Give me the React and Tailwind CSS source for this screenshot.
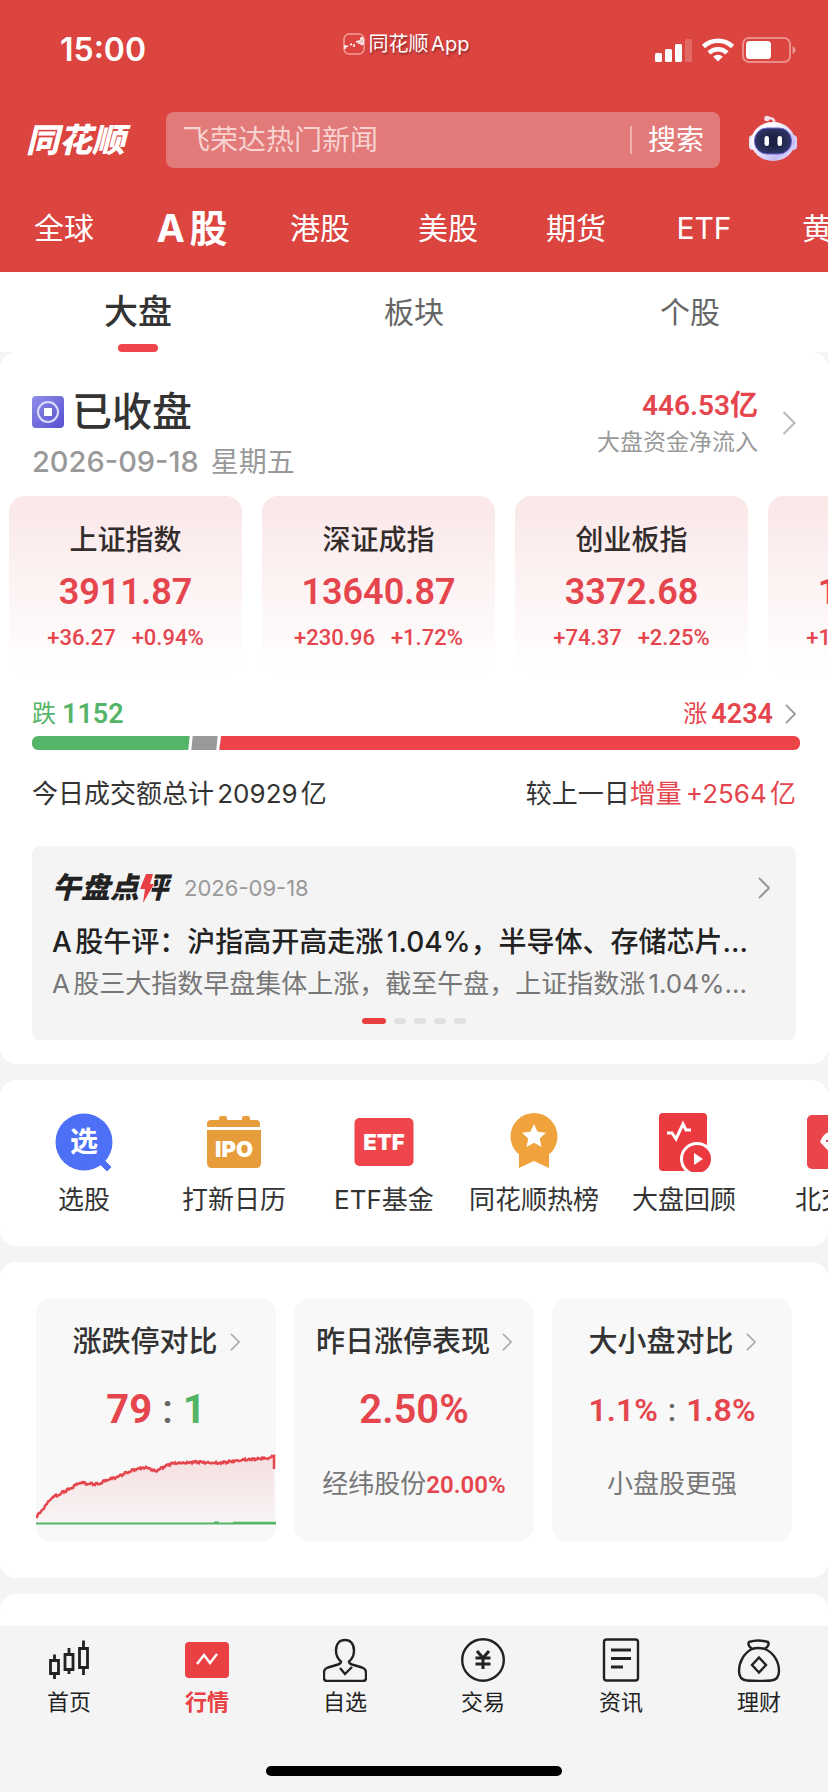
import { useState } from 'react';

const markets = ['全球', 'A股', '港股', '美股', '期货', 'ETF', '黄金'];
const sections = ['大盘', '板块', '个股'];

const indices = [
  { name: '上证指数', value: '3911.87', diff: '+36.27', pct: '+0.94%' },
  { name: '深证成指', value: '13640.87', diff: '+230.96', pct: '+1.72%' },
  { name: '创业板指', value: '3372.68', diff: '+74.37', pct: '+2.25%' },
  { name: '科创50', value: '1672.81', diff: '+18.65', pct: '+1.13%' },
];

const breadth = { down: 1152, flat: 184, up: 4234 };

// limit-up count over the day, in chart units
const limitUps = [
  [0, 67], [16, 48], [31, 40], [44, 33], [61, 34], [78, 28], [94, 21], [111, 17],
  [119, 21], [137, 13], [164, 12], [184, 13], [204, 10], [231, 8], [238, 6],
];

function buildLine(points) {
  const out = [];
  for (let i = 0; i < points.length - 1; i++) {
    const [x1, y1] = points[i];
    const [x2, y2] = points[i + 1];
    for (let x = x1; x < x2; x += 1) {
      const noise = Math.sin(x * x * 1.3) * 0.9 + Math.sin(x * 0.9) * 0.4;
      out.push(`${x} ${(y1 + ((y2 - y1) * (x - x1)) / (x2 - x1) + noise).toFixed(1)}`);
    }
  }
  return `M${out.join('L')}L238 6V19`;
}

function Chevron({ className }) {
  return (
    <svg viewBox="0 0 12 22" fill="none" stroke="currentColor" strokeWidth="2" className={className} aria-hidden="true">
      <path d="M1 1l10 10L1 21" />
    </svg>
  );
}

function StatusBar() {
  return (
    <div className="grid h-[100px] grid-cols-3 items-center">
      <div className="pl-[60px] text-[32px] leading-10 font-semibold">15:00</div>
      <div className="flex items-center justify-center gap-1 pr-4 pb-3 text-xl leading-7 [text-shadow:1px_2px_2px_rgb(0_0_0/0.35)]">
        <svg viewBox="0 0 22 22" className="size-[22px]" fill="none" stroke="#fff" aria-hidden="true">
          <rect x="1" y="1" width="20" height="20" rx="5" stroke="#f39c98" strokeWidth="1.5" />
          <path d="M2 12v4M2 14l3-1M7 12l2-1M11 11v3M13 9l3-1v3M18 5c3-2 3 9 0 6z" strokeWidth="1.5" />
        </svg>
        <span className="[text-autospace:normal]">同花顺App</span>
      </div>
      <div className="flex items-center justify-end gap-2 pr-8">
        <svg viewBox="0 0 40 24" className="h-6 w-10" fill="#fff" aria-hidden="true">
          <rect x="1" y="15" width="7" height="9" rx="1.5" />
          <rect x="11" y="11" width="7" height="13" rx="1.5" />
          <rect x="21" y="6" width="7" height="18" rx="1.5" />
          <rect x="31" y="1" width="7" height="23" rx="1.5" opacity="0.2" />
        </svg>
        <svg viewBox="0 0 32 24" className="h-6 w-8" fill="none" stroke="#fff" strokeWidth="4.500" aria-hidden="true">
          <path d="M1.500 8.500a21 21 0 0 1 29 0" />
          <path d="M7 14.800a13 13 0 0 1 18 0" />
          <path d="M16 23.500l-4.800-4.800a7 7 0 0 1 9.600 0z" fill="#fff" stroke="none" />
        </svg>
        <svg viewBox="0 0 54 26" className="h-[26px] w-[54px]" aria-hidden="true">
          <rect x="1" y="1" width="47" height="24" rx="6" fill="none" stroke="#fff" strokeOpacity="0.4" strokeWidth="2" />
          <rect x="4" y="4" width="25" height="18" rx="3.500" fill="#fff" />
          <path d="M50.500 9c4 1.500 4 6.500 0 8z" fill="#fff" opacity="0.45" />
        </svg>
      </div>
    </div>
  );
}

function Robot() {
  return (
    <svg viewBox="0 0 50 48" className="h-12 w-[50px]" aria-hidden="true">
      <defs>
        <linearGradient id="shell" x1="0" y1="0" x2="1" y2="1">
          <stop offset="0.3" stopColor="#fdfaff" />
          <stop offset="0.75" stopColor="#c4bcf3" />
          <stop offset="1" stopColor="#fff" />
        </linearGradient>
        <radialGradient id="visor">
          <stop offset="0.3" stopColor="#1c2143" />
          <stop offset="1" stopColor="#2d3463" />
        </radialGradient>
      </defs>
      <path d="M26 9c1-4-2-5-6-5" fill="none" stroke="#f3dcea" strokeWidth="2.500" />
      <circle cx="19" cy="4.500" r="2.800" fill="#f3dcea" />
      <rect x="1" y="21" width="8" height="15" rx="4" fill="#e9e2fb" />
      <rect x="41" y="21" width="8" height="15" rx="4" fill="#d5ccf7" />
      <ellipse cx="25" cy="27.500" rx="22" ry="19.500" fill="url(#shell)" />
      <rect x="6.500" y="14" width="37" height="26" rx="12.500" fill="url(#visor)" stroke="#7064d8" />
      <rect x="16.500" y="22" width="4.500" height="10" rx="2.200" fill="#fff" />
      <rect x="29.500" y="22" width="4.500" height="10" rx="2.200" fill="#fff" />
    </svg>
  );
}

const toolIcons = {
  pick: (
    <>
      <circle cx="30" cy="30" r="28.500" fill="#4d70f7" />
      <path d="M49 47l8 8-4 4-9-9z" fill="#4d70f7" stroke="#4d70f7" />
      <text x="30" y="40" textAnchor="middle" fontSize="28" fontWeight="700" fill="#fff">选</text>
    </>
  ),
  ipo: (
    <>
      <path d="M3 15V12q0-4 4-4h8V6q0-2 2-2h4q2 0 2 2v2h15V6q0-2 2-2h4q2 0 2 2v2h6q4 0 4 4v3z" fill="#e79d3b" />
      <path d="M3 18h54v33q0 5-5 5H8q-5 0-5-5z" fill="#e79d3b" />
      <text x="30" y="45" textAnchor="middle" fontSize="22" fontWeight="900" fill="#fff">IPO</text>
    </>
  ),
  etf: (
    <>
      <rect x="0.500" y="6" width="59" height="48" rx="5" fill="#ee464b" />
      <text x="30" y="38" textAnchor="middle" fontSize="22" fontWeight="900" fill="#fff">ETF</text>
    </>
  ),
  medal: (
    <>
      <path d="M15 38h30v18l-15-7-15 7z" fill="#f0a33d" />
      <circle cx="30" cy="24.500" r="23.500" fill="#f0a33d" />
      <path d="M30 12l3.600 7.800 8.400 1-6.200 5.800 1.700 8.400-7.500-4.200-7.500 4.200 1.700-8.400-6.200-5.800 8.400-1z" fill="#fff" />
    </>
  ),
  review: (
    <>
      <rect x="5" y="1" width="48" height="58" rx="4" fill="#ea3a40" />
      <path d="M13 21h5l4 6 7-15 3 6h5" fill="none" stroke="#fff" strokeWidth="3" />
      <circle cx="43" cy="47" r="15.500" fill="#ea3a40" stroke="#fff" strokeWidth="3" />
      <path d="M40 41l9 6-9 6z" fill="#fff" />
    </>
  ),
  north: (
    <>
      <rect x="3" y="3" width="54" height="54" rx="5" fill="#ea454a" />
      <path d="M16 30q4-11 14-11t14 11L30 45z" fill="#fff" />
      <path d="M22 29h16M26 23l4 6 4-6" fill="none" stroke="#ea454a" strokeWidth="2" />
    </>
  ),
};

const tools = [
  { label: '选股', icon: 'pick' },
  { label: '打新日历', icon: 'ipo' },
  { label: 'ETF基金', icon: 'etf' },
  { label: '同花顺热榜', icon: 'medal' },
  { label: '大盘回顾', icon: 'review' },
  { label: '北交所', icon: 'north' },
];

const navIcons = {
  home: <path strokeWidth="2.800" d="M5.500 15.500V21M1.500 21.500h8v13h-8zM5.500 34.500V40M20 9v6M16 15.500h8v15h-8zM20 30.500V35M34.500 1.500V9M30.500 9.500h8v19h-8zM34.500 28.500V36" />,
  market: (
    <>
      <rect x="0" y="4" width="44" height="36" rx="4" fill="#e94043" stroke="none" />
      <path d="M12 26l7-9 6 8 7-9" stroke="#fff" />
    </>
  ),
  self: (
    <>
      <path d="M18 23.500c0 2-1.500 2.500-3 3L5 29.500q-4 1.500-4 5V40q0 3 3 3h36q3 0 3-3v-5.500q0-3.500-4-5l-10-3c-1.500-.5-3-1-3-3 2.500-2 5-5.500 5-11C31 6 27.500 2 22 2s-9 4-9 10.500c0 5.500 2.500 9 5 11z" />
      <path d="M17 30l5 6 7-7" />
    </>
  ),
  trade: (
    <>
      <circle cx="22" cy="22" r="20.800" />
      <path d="M16 13l6 7 6-7M14.500 20h15M14.500 26h15M22 20v11" strokeWidth="3" />
    </>
  ),
  news: (
    <>
      <rect x="5" y="1.500" width="34" height="41" rx="2.500" />
      <path d="M12 12h20M12 20.500h20M12 29h12" strokeWidth="2.800" />
    </>
  ),
  wealth: (
    <>
      <path d="M15 11q-5-4-3-7 9-3 19 0 2 3-3 7-7-2-13 0zM15 11C7 15 2 24 2 33q0 9 8 9.500 12 1 24 0 8-.5 8-9.500c0-9-5-18-14-22" />
      <path d="M22 19.500l7 7.500-7 7.500-7-7.500z" />
    </>
  ),
};

const navItems = [
  { label: '首页', icon: 'home' },
  { label: '行情', icon: 'market' },
  { label: '自选', icon: 'self' },
  { label: '交易', icon: 'trade' },
  { label: '资讯', icon: 'news' },
  { label: '理财', icon: 'wealth' },
];

function StatCard({ title, children }) {
  return (
    <a href="#" className="flex flex-col overflow-hidden rounded-2xl bg-[#f8f8f8] pt-6 text-center">
      <h3 className="flex items-center justify-center gap-3 text-[29px] leading-10 font-medium whitespace-nowrap text-[#333]">
        {title}
        <Chevron className="h-[18px] w-[10px] text-[#aaa]" />
      </h3>
      {children}
    </a>
  );
}

export default function App() {
  const [market, setMarket] = useState('A股');
  const [section, setSection] = useState('大盘');
  const line = buildLine(limitUps);

  return (
    <div className="flex min-h-screen flex-col overflow-x-hidden bg-[#f4f4f4] font-['Inter','Noto_Sans_CJK_SC',sans-serif] text-[#333]">
      {/* Header */}
      <header className="bg-[#dc4440] text-white">
        <StatusBar />
        <div className="flex h-20 items-center gap-7 pr-[30px] pl-[26px]">
          <h1 className="w-28 text-[33px] leading-10 font-black whitespace-nowrap italic">同花顺</h1>
          <form className="flex h-14 min-w-0 flex-1 items-center rounded-lg bg-[#e27a79] px-4" onSubmit={e => e.preventDefault()}>
            <input
              type="search"
              aria-label="搜索"
              placeholder="飞荣达热门新闻"
              className="min-w-0 flex-1 bg-transparent text-[28px] leading-9 outline-none placeholder:text-[#f8d2d0]"
            />
            <span className="h-7 w-0.5 bg-[#efb0ae]" />
            <button type="submit" className="pl-4 text-[28px] leading-9">搜索</button>
          </form>
          <button type="button" aria-label="智能助手" className="pb-1">
            <Robot />
          </button>
        </div>
        <nav className="flex h-[92px] items-center overflow-hidden pt-1">
          {markets.map(m => (
            <button
              key={m}
              type="button"
              onClick={() => setMarket(m)}
              className={`w-32 shrink-0 leading-[52px] whitespace-nowrap [text-autospace:normal] ${m === market ? 'text-[38px] font-bold' : 'text-[30px]'}`}
            >
              {m}
            </button>
          ))}
        </nav>
      </header>

      {/* Section tabs */}
      <div className="grid h-20 grid-cols-3 bg-white">
        {sections.map(s => (
          <button
            key={s}
            type="button"
            onClick={() => setSection(s)}
            className={`flex flex-col items-center justify-between pt-4 leading-[48px] ${s === section ? 'text-[34px] font-medium text-[#333]' : 'text-[30px] text-[#666]'}`}
          >
            {s}
            {s === section && <span className="h-2 w-10 rounded-full bg-[#ef454a]" />}
          </button>
        ))}
      </div>

      <main className="flex flex-1 flex-col gap-4">
        {/* Market overview */}
        <section className="rounded-2xl bg-white pt-9 pb-6">
          <div className="flex justify-between px-8">
            <div>
              <h2 className="flex items-center gap-2 text-[40px] leading-[48px] font-medium">
                <svg viewBox="0 0 32 32" className="size-8" aria-hidden="true">
                  <defs>
                    <linearGradient id="coin" x1="0" y1="0" x2="1" y2="1">
                      <stop stopColor="#8d8de8" />
                      <stop offset="1" stopColor="#5650cf" />
                    </linearGradient>
                  </defs>
                  <rect width="32" height="32" rx="4" fill="url(#coin)" />
                  <circle cx="16" cy="16" r="10" fill="none" stroke="#dcdcfa" strokeWidth="2" />
                  <rect x="12" y="12" width="8" height="8" fill="#fff" />
                </svg>
                已收盘
              </h2>
              <p className="mt-2 flex gap-3 text-[28px] leading-9 text-[#999]">
                <span className="text-[29px] font-medium">2026-09-18</span> 星期五
              </p>
            </div>
            <a href="#" className="flex items-center gap-6 self-start text-right">
              <span>
                <strong className="block font-['Roboto','Noto_Sans_CJK_SC',sans-serif] text-[28px] leading-9 font-semibold text-[#e5454d]">446.53亿</strong>
                <span className="mt-0.5 block text-[23px] leading-8 text-[#999]">大盘资金净流入</span>
              </span>
              <Chevron className="h-6 w-[14px] text-[#bbb]" />
            </a>
          </div>

          <div className="mt-4 flex gap-5 overflow-hidden pl-[9px]">
            {indices.map(i => (
              <a
                key={i.name}
                href="#"
                className="w-[233px] shrink-0 rounded-2xl bg-linear-to-b from-[#fae7e8] to-white pt-6.5 pb-5.5 text-center whitespace-nowrap text-[#e5454d]"
              >
                <h3 className="text-[28px] leading-9 font-medium text-[#332c2d]">{i.name}</h3>
                <p className="mt-3 font-['Roboto'] text-4xl leading-[44px] font-semibold">{i.value}</p>
                <p className="mt-2.5 flex justify-center gap-4 font-['Roboto'] text-[22px] leading-7 font-medium">
                  <span>{i.diff}</span>
                  <span>{i.pct}</span>
                </p>
              </a>
            ))}
          </div>

          <div className="px-8">
            <div className="mt-6 flex justify-between">
              <p className="flex items-center gap-1.5 text-[24px] leading-8 text-[#54b467]">
                跌
                <span className="font-['Roboto'] text-[27px] font-semibold">{breadth.down}</span>
              </p>
              <a href="#" className="flex items-center gap-1 text-[24px] leading-8 text-[#e5454d]">
                涨
                <span className="font-['Roboto'] text-[27px] font-semibold">{breadth.up}</span>
                <Chevron className="ml-2 h-5 w-[11px] text-[#999]" />
              </a>
            </div>
            <div className="-mr-1 mt-1.5 flex h-3.5 overflow-hidden rounded-md">
              <div className="bg-[#54b467]" style={{ flexGrow: breadth.down }} />
              <div className="-ml-0.5 -skew-x-6 border-x-3 border-white bg-[#999]" style={{ flexGrow: breadth.flat }} />
              <div className="-ml-1 bg-[#ec4448] [clip-path:polygon(5px_0,100%_0,100%_100%,3px_100%)]" style={{ flexGrow: breadth.up }} />
            </div>
            <div className="mt-6.5 flex justify-between text-[26px] leading-9 [text-autospace:normal]">
              <p>今日成交额总计20929亿</p>
              <p>
                较上一日<span className="text-[#e5454d]">增量</span>
                <span className="ml-1 text-[#e5454d]">+2564亿</span>
              </p>
            </div>

            {/* Midday comment */}
            <a href="#" className="mt-8.5 block rounded-lg bg-[#f4f4f4] px-5 pt-6 pb-4">
              <div className="flex items-center gap-4">
                <h3 className="text-[29px] leading-9 font-black whitespace-nowrap text-[#222] italic">
                  午盘点
                  <span className="relative">
                    评
                    <svg viewBox="0 0 16 36" className="absolute top-0 left-0 h-9 w-4" aria-hidden="true">
                      <path d="M2 0h14l-6 36H-4z" fill="#f4f4f4" />
                      <path d="M7 4h7l-3 10h4L4 33l2-14H1z" fill="#ea3f45" />
                    </svg>
                  </span>
                </h3>
                <time className="text-[22px] leading-9 text-[#999]">2026-09-18</time>
                <Chevron className="mr-1.5 ml-auto h-[22px] w-3 text-[#999]" />
              </div>
              <p className="mt-4 overflow-hidden text-[28px] leading-10 font-medium whitespace-nowrap text-[#222] [text-autospace:normal]">
                A股午评：沪指高开高走涨1.04%，半导体、存储芯片...
              </p>
              <p className="mt-1 overflow-hidden text-[26px] leading-9 whitespace-nowrap text-[#777] [text-autospace:normal]">
                A股三大指数早盘集体上涨，截至午盘，上证指数涨1.04%...
              </p>
              <div className="mt-4 flex justify-center gap-2">
                <span className="h-1.5 w-6 rounded-full bg-[#ea3f40]" />
                {[1, 2, 3, 4].map(n => (
                  <span key={n} className="h-1.5 w-3 rounded-full bg-[#e0e0e0]" />
                ))}
              </div>
            </a>
          </div>
        </section>

        {/* Tools */}
        <section className="flex overflow-hidden rounded-2xl bg-white pt-8 pb-7.5 pl-[9px]">
          {tools.map(t => (
            <a key={t.label} href="#" className="flex w-[150px] shrink-0 flex-col items-center">
              <svg viewBox="0 0 60 60" className="size-[60px]" aria-hidden="true">{toolIcons[t.icon]}</svg>
              <span className="mt-3 text-[26px] leading-8 whitespace-nowrap">{t.label}</span>
            </a>
          ))}
        </section>

        {/* Statistics */}
        <section className="grid grid-cols-3 gap-[18px] rounded-2xl bg-white p-9">
          <StatCard title="涨跌停对比">
            <p className="mt-6 flex justify-center gap-2.5 font-['Roboto'] text-[40px] leading-[48px] font-bold text-[#e5454d]">
              79
              <span className="font-medium text-[#666]">:</span>
              <span className="text-[#54b467]">1</span>
            </p>
            <svg viewBox="0 0 240 76" preserveAspectRatio="none" className="mt-4 h-[76px] w-full" fill="none" aria-hidden="true">
              <defs>
                <linearGradient id="area" x1="0" y1="0" x2="0" y2="1">
                  <stop stopColor="#e5454d" stopOpacity="0.14" />
                  <stop offset="1" stopColor="#e5454d" stopOpacity="0.02" />
                </linearGradient>
              </defs>
              <path d={`${line}V73H0Z`} fill="url(#area)" />
              <path d={line} stroke="#e5454d" strokeWidth="2.500" />
              <path d="M0 73.500h240" stroke="#54b467" strokeWidth="2" />
              <path d="M178 72.500h5M197 72.800h43" stroke="#54b467" strokeWidth="2" />
            </svg>
          </StatCard>
          <StatCard title="昨日涨停表现">
            <p className="mt-6 font-['Roboto'] text-[40px] leading-[48px] font-semibold text-[#e5454d]">2.50%</p>
            <p className="mt-8 pb-10 text-[26px] leading-9 text-[#777]">
              经纬股份<span className="font-['Roboto'] text-2xl font-semibold text-[#e5454d]">20.00%</span>
            </p>
          </StatCard>
          <StatCard title="大小盘对比">
            <p className="mt-6 flex justify-center gap-2.5 font-['Roboto'] text-[32px] leading-[48px] font-semibold text-[#e5454d]">
              1.1%
              <span className="font-medium text-[#666]">:</span>
              <span>1.8%</span>
            </p>
            <p className="mt-8 pb-10 text-[26px] leading-9 text-[#777]">小盘股更强</p>
          </StatCard>
        </section>

        <section className="min-h-7 flex-1 rounded-t-2xl bg-white" />
      </main>

      {/* Bottom navigation */}
      <footer className="bg-[#f4f4f4] pt-3 pb-4">
        <nav className="grid grid-cols-6">
          {navItems.map(n => (
            <a
              key={n.label}
              href="#"
              className={`flex flex-col items-center ${n.icon === 'market' ? 'font-bold text-[#e94043]' : 'text-[#222]'}`}
            >
              <svg
                viewBox={n.icon === 'home' ? '-2 -1 44 44' : '0 0 44 44'}
                className="size-11"
                fill="none"
                stroke="currentColor"
                strokeWidth="2.400"
                aria-hidden="true"
              >
                {navIcons[n.icon]}
              </svg>
              <span className="mt-1.5 text-[22px] leading-7">{n.label}</span>
            </a>
          ))}
        </nav>
        <div className="mx-auto mt-12.5 h-2.5 w-[296px] rounded-full bg-black" />
      </footer>
    </div>
  );
}
